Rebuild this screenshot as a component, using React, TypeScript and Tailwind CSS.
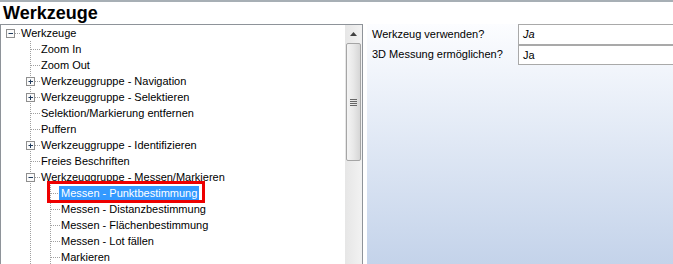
import React from "react"

type Kind = "leaf" | "plus" | "minus"

interface Node {
  label: string
  level: number
  kind: Kind
  selected?: boolean
}

const nodes: Node[] = [
  { label: "Werkzeuge", level: 0, kind: "minus" },
  { label: "Zoom In", level: 1, kind: "leaf" },
  { label: "Zoom Out", level: 1, kind: "leaf" },
  { label: "Werkzeuggruppe - Navigation", level: 1, kind: "plus" },
  { label: "Werkzeuggruppe - Selektieren", level: 1, kind: "plus" },
  { label: "Selektion/Markierung entfernen", level: 1, kind: "leaf" },
  { label: "Puffern", level: 1, kind: "leaf" },
  { label: "Werkzeuggruppe - Identifizieren", level: 1, kind: "plus" },
  { label: "Freies Beschriften", level: 1, kind: "leaf" },
  { label: "Werkzeuggruppe - Messen/Markieren", level: 1, kind: "minus" },
  { label: "Messen - Punktbestimmung", level: 2, kind: "leaf", selected: true },
  { label: "Messen - Distanzbestimmung", level: 2, kind: "leaf" },
  { label: "Messen - Flächenbestimmung", level: 2, kind: "leaf" },
  { label: "Messen - Lot fällen", level: 2, kind: "leaf" },
  { label: "Markieren", level: 2, kind: "leaf" },
]

const LINE = "#a0a0a0"

// one 20x16 gutter cell of the tree connectors
function Cell({ own, vertical, box, root }: { own: boolean; vertical: boolean; box?: Kind; root?: boolean }) {
  return (
    <svg width="20" height="16" className="shrink-0 block">
      {vertical && !root && (
        <line x1="9.5" y1="0" x2="9.5" y2="16" stroke={LINE} strokeDasharray="1 1" />
      )}
      {own && <line x1="10" y1="8.5" x2="20" y2="8.5" stroke={LINE} strokeDasharray="1 1" />}
      {own && box && box !== "leaf" && (
        <g>
          <rect x="5.5" y="4.5" width="8" height="8" fill="#fafafa" stroke="#8f8f8f" />
          <line x1="7.5" y1="8.5" x2="12" y2="8.5" stroke="#1f3a5c" />
          {box === "plus" && <line x1="9.5" y1="6.5" x2="9.5" y2="11" stroke="#1f3a5c" />}
        </g>
      )}
    </svg>
  )
}

function TreeRow({ node }: { node: Node }) {
  const cells = []
  for (let l = 0; l <= node.level; l++) {
    const own = l === node.level
    cells.push(
      <Cell key={l} own={own} vertical={l >= 1} box={own ? node.kind : undefined} root={node.level === 0} />
    )
  }
  return (
    <div className="flex h-4 items-center">
      {cells}
      <div className="relative ml-[-2px] flex h-4 items-center">
        <span
          className={
            node.selected
              ? "bg-[#3399ff] px-[2px] leading-[15px] text-white"
              : "px-[2px] leading-[15px] text-black"
          }
        >
          {node.label}
        </span>
        {node.selected && (
          <div className="pointer-events-none absolute left-[-12px] top-[-4px] h-[22px] w-[158px] border-[3px] border-[#ee0000]" />
        )}
      </div>
    </div>
  )
}

function ScrollBar() {
  return (
    <div className="flex w-[17px] shrink-0 flex-col bg-gradient-to-r from-[#e6e6e6] to-[#f2f2f2]">
      <div className="flex h-[17px] items-center justify-center">
        <svg width="7" height="4">
          <polygon points="0,4 3.5,0 7,4" fill="#404040" />
        </svg>
      </div>
      <div className="mx-[1px] mt-[1px] flex h-[118px] items-center justify-center rounded-[2px] border border-[#a5a5a5] bg-gradient-to-r from-[#f4f4f4] via-[#e8e8e8] to-[#d6d6d6]">
        <div className="flex flex-col gap-[1px]">
          <div className="h-px w-[7px] bg-[#666]" />
          <div className="h-px w-[7px] bg-[#666]" />
          <div className="h-px w-[7px] bg-[#666]" />
          <div className="h-px w-[7px] bg-[#666]" />
        </div>
      </div>
      <div className="flex-1" />
    </div>
  )
}

export default function App() {
  return (
    <div
      className="flex h-[264px] w-[673px] flex-col overflow-hidden border-t-2 border-[#a7afb5] bg-white text-[11px] text-black"
      style={{ fontFamily: '"Liberation Sans", Arial, sans-serif' }}
    >
      <div className="h-[22px] pl-[3px] text-[18px] font-bold leading-[22px]">Werkzeuge</div>
      <div className="flex min-h-0 flex-1">
        <div className="flex w-[363px] shrink-0 border-l border-r border-t border-[#8e9399]">
          <div className="flex-1 overflow-hidden">
            {nodes.map((n) => (
              <TreeRow key={n.label} node={n} />
            ))}
          </div>
          <ScrollBar />
        </div>
        <div className="ml-[4px] flex flex-1 flex-col bg-gradient-to-b from-[#fcfdff] to-[#c4d3ea]">
          <div className="grid grid-cols-[151px_1fr]">
            <div className="flex h-[20px] items-center pl-[5px]">Werkzeug verwenden?</div>
            <div className="flex h-[20px] items-center border-l border-t border-[#a9a9a9] bg-white pl-[4px] italic">
              Ja
            </div>
            <div className="flex h-[21px] items-center pl-[5px]">3D Messung ermöglichen?</div>
            <div className="flex h-[21px] items-center border-b border-l border-t-2 border-[#a9a9a9] bg-white pl-[4px]">
              Ja
            </div>
          </div>
        </div>
      </div>
    </div>
  )
}
